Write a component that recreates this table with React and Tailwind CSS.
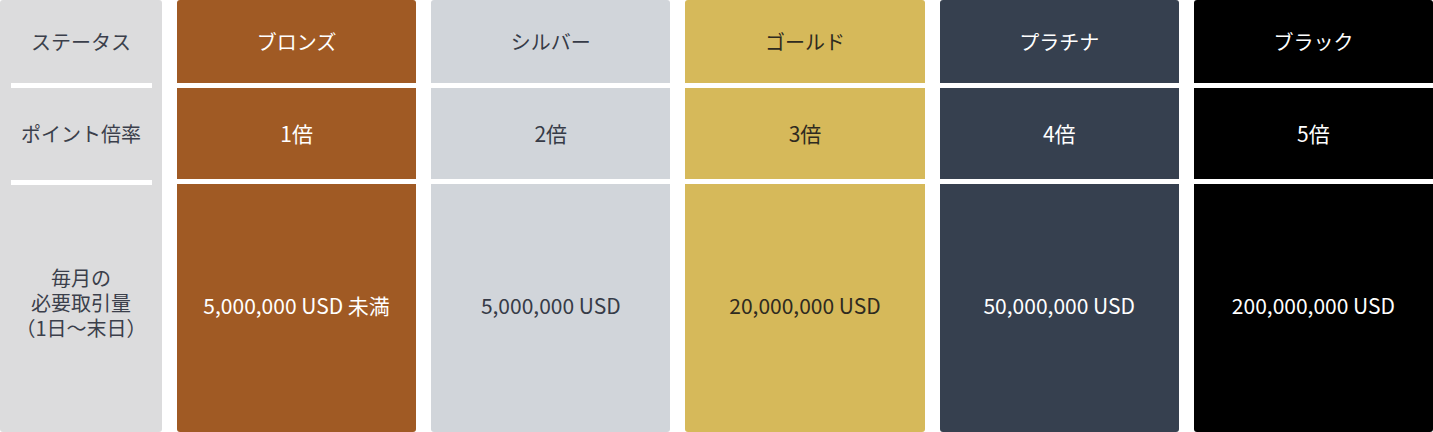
import React from "react";

const tiers = [
  { name: "ブロンズ", rate: "1倍", volume: "5,000,000 USD 未満", bg: "bg-[#a05a24]", text: "text-white" },
  { name: "シルバー", rate: "2倍", volume: "5,000,000 USD", bg: "bg-[#d1d5da]", text: "text-[#363b47]" },
  { name: "ゴールド", rate: "3倍", volume: "20,000,000 USD", bg: "bg-[#d6b95a]", text: "text-[#2e2a20]" },
  { name: "プラチナ", rate: "4倍", volume: "50,000,000 USD", bg: "bg-[#36404f]", text: "text-white" },
  { name: "ブラック", rate: "5倍", volume: "200,000,000 USD", bg: "bg-black", text: "text-white" },
];

export default function App() {
  return (
    <div
      className="flex gap-[15px] w-[1433px] h-[432px] bg-white text-[20px] font-normal"
      style={{ fontFamily: '"Noto Sans CJK JP", "Noto Sans", sans-serif' }}
    >
      {/* Label column */}
      <div className="w-[162px] shrink-0 flex flex-col bg-[#dcdcdd] rounded-[3px] text-[#3b3f4b]">
        <div className="h-[83px] flex items-center justify-center">ステータス</div>
        <div className="h-[5px] mr-[10px] ml-[11px] bg-white" />
        <div className="h-[92px] flex items-center justify-center">ポイント倍率</div>
        <div className="h-[5px] mr-[10px] ml-[11px] bg-white" />
        <div className="flex-1 flex items-center justify-center text-center leading-[25px] pb-[12px]">
          <p>
            毎月の
            <br />
            必要取引量
            <br />
            （1日〜末日）
          </p>
        </div>
      </div>

      {/* Tier columns */}
      {tiers.map((t) => (
        <div
          key={t.name}
          className={`flex-1 flex flex-col gap-[5px] rounded-[3px] overflow-hidden ${t.text}`}
        >
          <div className={`h-[83px] flex items-center justify-center ${t.bg}`}>{t.name}</div>
          <div className={`h-[91px] flex items-center justify-center text-[21px] ${t.bg}`}>{t.rate}</div>
          <div className={`flex-1 flex items-center justify-center text-[21px] pb-[4px] ${t.bg}`}>{t.volume}</div>
        </div>
      ))}
    </div>
  );
}
